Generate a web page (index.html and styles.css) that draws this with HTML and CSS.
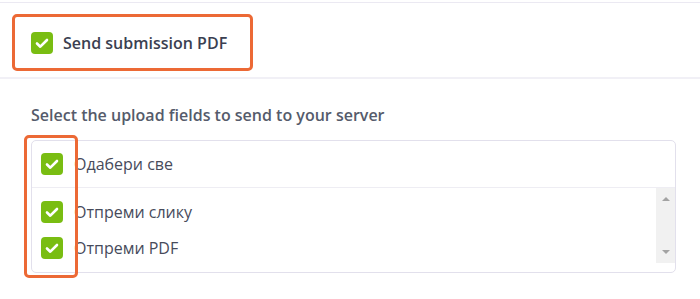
FILE: index.html
```html
<!DOCTYPE html>
<html>
<head>
<meta charset="utf-8">
<link rel="stylesheet" href="styles.css">
</head>
<body>
<div class="page">
  <section class="top">
    <label class="hl-box">
      <span class="cb"><svg viewBox="0 0 22 22"><path d="M6 11.5l3.3 3.2L16 8" /></svg></span>
      <span class="main-label">Send submission PDF</span>
    </label>
  </section>
  <section class="fields">
    <div class="caption">Select the upload fields to send to your server</div>
    <div class="listbox">
      <div class="all-row">
        <span class="cb"><svg viewBox="0 0 22 22"><path d="M6 11.5l3.3 3.2L16 8" /></svg></span>
        <span class="item-label">Одабери све</span>
      </div>
      <div class="scroll-area">
        <div class="items">
          <div class="item">
            <span class="cb"><svg viewBox="0 0 22 22"><path d="M6 11.5l3.3 3.2L16 8" /></svg></span>
            <span class="item-label">Отпреми слику</span>
          </div>
          <div class="item">
            <span class="cb"><svg viewBox="0 0 22 22"><path d="M6 11.5l3.3 3.2L16 8" /></svg></span>
            <span class="item-label">Отпреми PDF</span>
          </div>
        </div>
        <div class="scrollbar">
          <span class="arrow up"></span>
          <span class="arrow down"></span>
        </div>
      </div>
      <div class="hl-col"></div>
    </div>
  </section>
</div>
</body>
</html>
```

FILE: styles.css
```css
* { box-sizing: border-box; }
html, body { margin: 0; padding: 0; background: #fff; }
body {
  font-family: "Open Sans", "Noto Sans", sans-serif;
  color: #3b3f51;
  width: 700px;
  height: 299px;
  overflow: hidden;
}
.page { padding-top: 2px; }
.top {
  border-top: 1px solid #ebe9f2;
  border-bottom: 2px solid #f1f0f6;
  height: 77px;
  padding: 11px 0 0 12px;
}
.hl-box {
  display: flex;
  align-items: center;
  width: 241px;
  height: 57px;
  border: 3px solid #ec6935;
  border-radius: 5px;
  padding-left: 16px;
  gap: 10px;
}
.cb {
  width: 22px;
  height: 22px;
  border-radius: 4px;
  background: #79bd12;
  display: inline-flex;
  flex: none;
}
.cb svg { width: 22px; height: 22px; }
.cb path {
  fill: none;
  stroke: #fff;
  stroke-width: 2.6;
  stroke-linecap: round;
  stroke-linejoin: round;
}
.main-label {
  font-size: 16px;
  font-weight: 600;
  color: #3b3f51;
}
.fields { padding: 25px 24px 0 31px; }
.caption {
  font-size: 16px;
  font-weight: 600;
  color: #555b6b;
  height: 36px;
}
.listbox {
  position: relative;
  width: 645px;
  height: 133px;
  border: 1px solid #e2e0ec;
  border-radius: 5px;
}
.all-row {
  display: flex;
  align-items: center;
  height: 47px;
  padding-left: 9px;
  gap: 11px;
  border-bottom: 1px solid #eeedf3;
}
.item-label {
  font-size: 16px;
  color: #474b5b;
}
.scroll-area {
  display: flex;
  height: 75px;
}
.items {
  flex: 1;
  padding-top: 13px;
  display: flex;
  flex-direction: column;
  gap: 14px;
}
.item {
  display: flex;
  align-items: center;
  height: 22px;
  padding-left: 9px;
  gap: 11px;
}
.scrollbar {
  width: 19px;
  background: #f1f1f1;
  display: flex;
  flex-direction: column;
  align-items: center;
  justify-content: space-between;
  padding: 9px 0 9px;
}
.arrow {
  width: 0;
  height: 0;
  border-left: 4px solid transparent;
  border-right: 4px solid transparent;
}
.arrow.up { border-bottom: 4px solid #a3a3a3; }
.arrow.down { border-top: 4px solid #a3a3a3; }
.hl-col {
  position: absolute;
  left: -8px;
  top: -6px;
  width: 54px;
  height: 143px;
  border: 3px solid #ec6935;
  border-radius: 5px;
}
```
